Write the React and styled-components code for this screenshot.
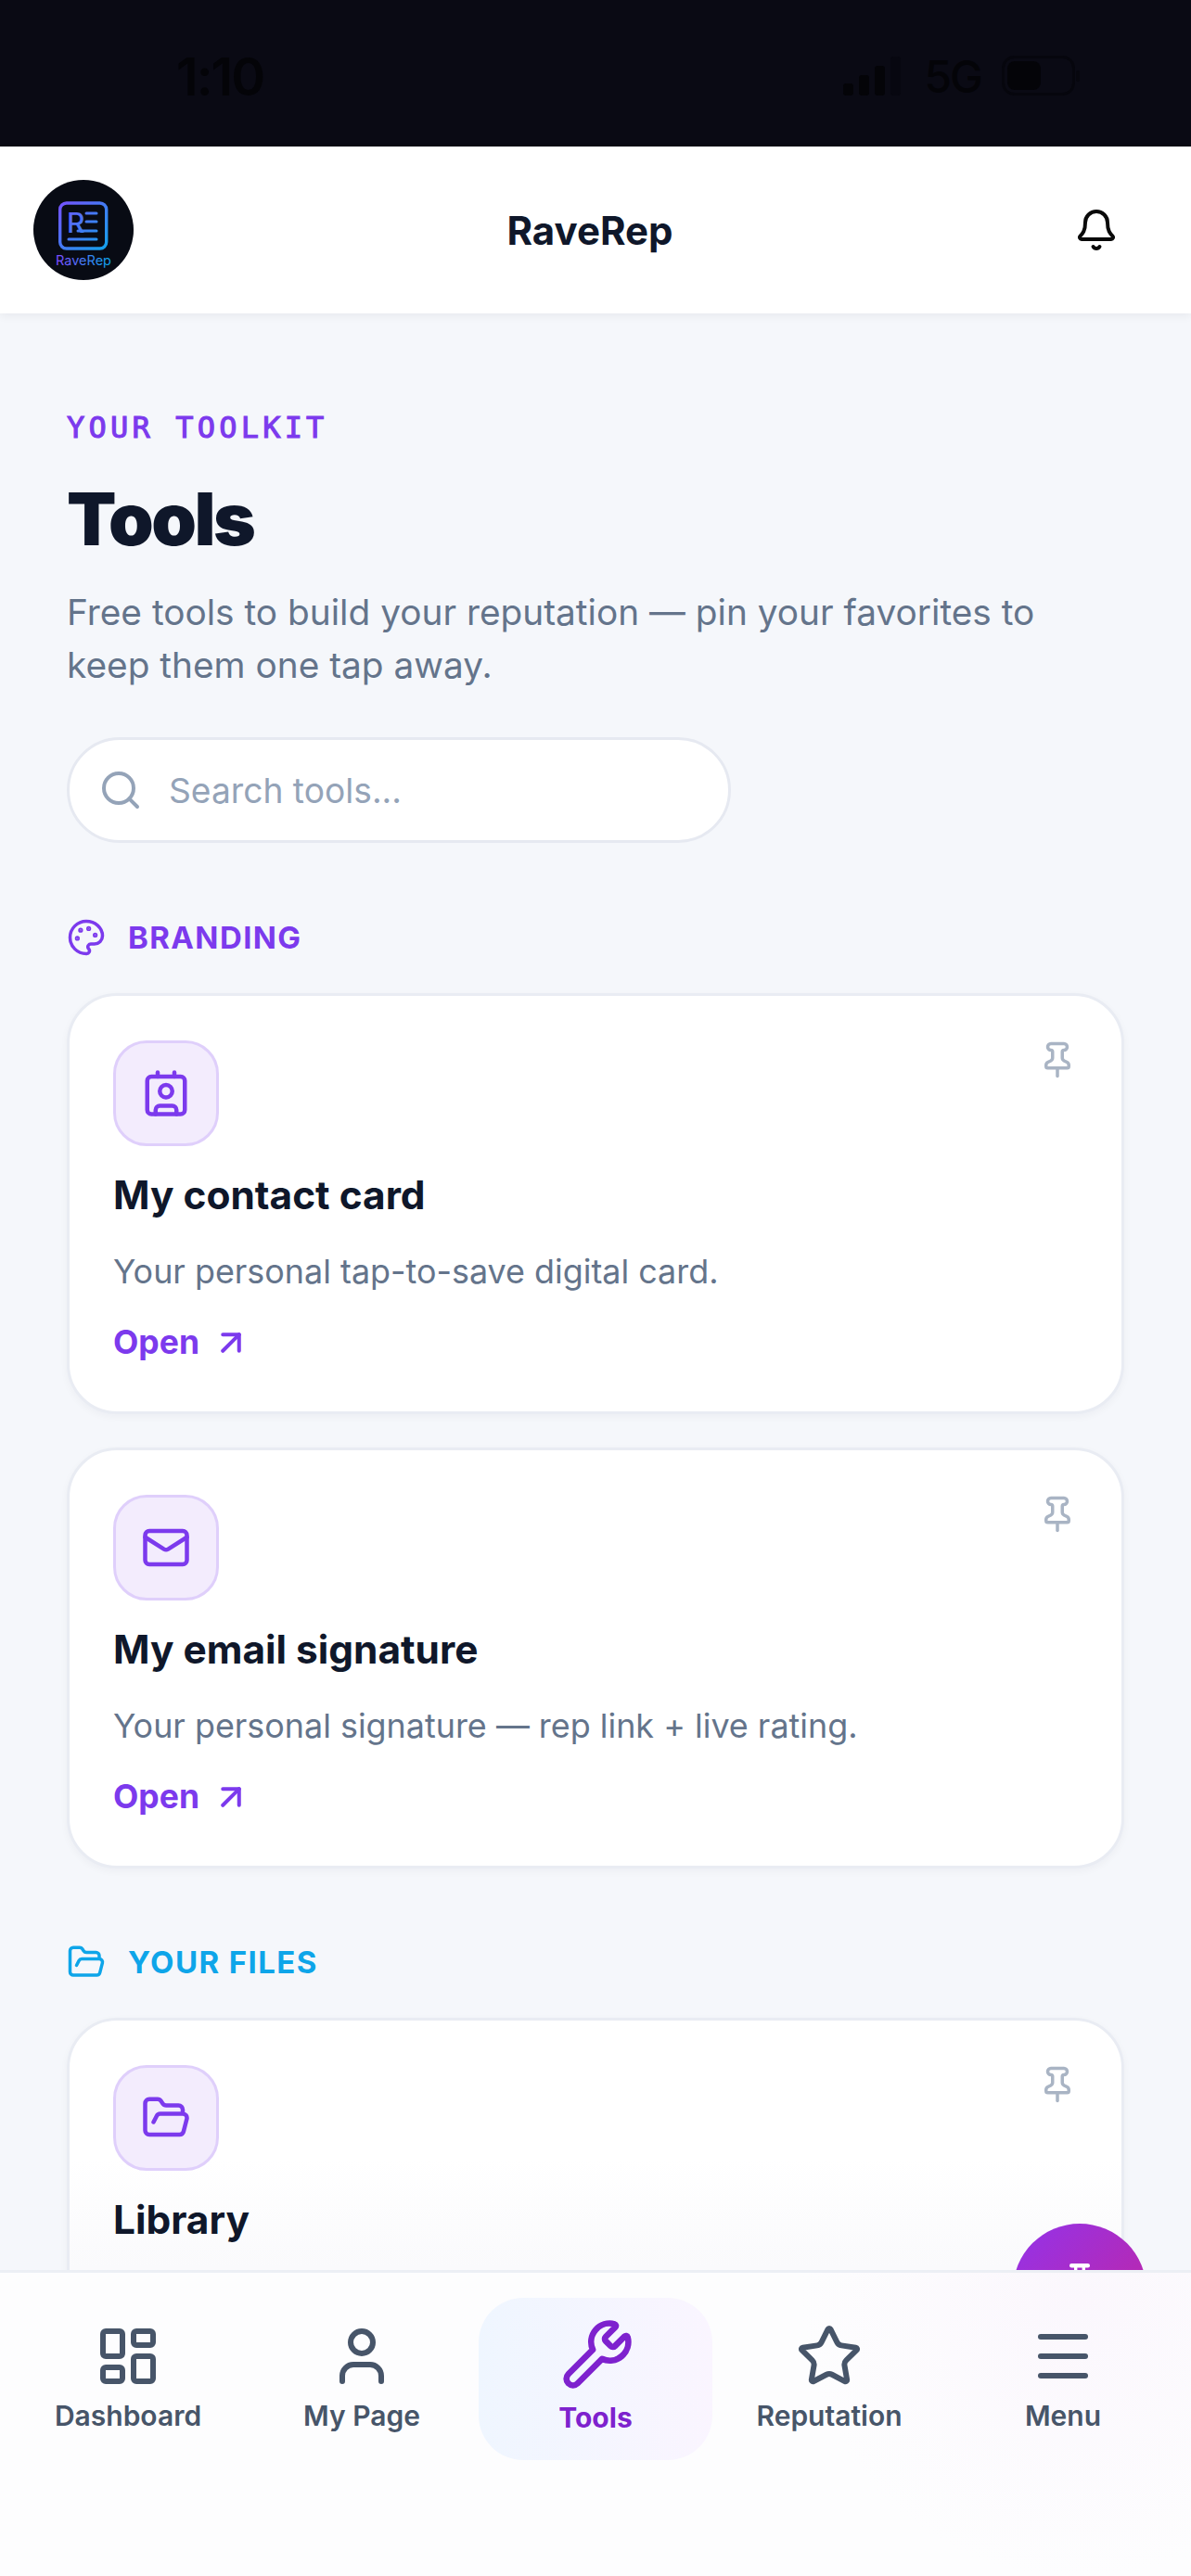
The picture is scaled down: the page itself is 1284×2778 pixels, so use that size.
import React from "react";
import styled, { createGlobalStyle } from "styled-components";
import { ArrowUpRight, Bell, Contact, FolderOpen, LayoutDashboard, Mail, Menu, Palette, Pin, Search, Star, User, Wrench } from "lucide-react";

const Global = createGlobalStyle`
  html, body { margin: 0; padding: 0; background: #fff; }
  * { box-sizing: border-box; }
  body { font-family: Inter, "Liberation Sans", sans-serif; }
`;

const Screen = styled.div`
  position: relative;
  width: 1284px;
  height: 2778px;
  overflow: hidden;
  background: #f5f7fb;
  display: flex;
  flex-direction: column;
`;

const StatusBar = styled.div`
  height: 158px;
  flex: none;
  background: #0a0a14;
  color: #040408;
  display: flex;
  align-items: center;
  justify-content: space-between;
  padding: 0 120px 0 190px;
`;
const Clock = styled.span`
  font: 600 56px Inter, sans-serif;
  letter-spacing: -2px;
  margin-top: 8px;
`;
const StatusRight = styled.div`
  display: flex;
  align-items: center;
  gap: 24px;
  margin-top: 6px;
`;
const FiveG = styled.span`
  font: 500 48px Inter, sans-serif;
  letter-spacing: -2px;
  margin-right: -2px;
`;

const Header = styled.header`
  height: 180px;
  flex: none;
  background: #fff;
  box-shadow: 0 3px 9px rgba(15, 23, 42, 0.06);
  position: relative;
  z-index: 1;
  display: flex;
  align-items: center;
  justify-content: space-between;
  padding: 0 78px 0 36px;
`;
const LogoDisc = styled.div`
  width: 108px;
  height: 108px;
  border-radius: 50%;
  background: #080b14;
  display: flex;
  align-items: center;
  justify-content: center;
`;
const Brand = styled.h2`
  margin: 0 30px 0 0;
  font-size: 42px;
  font-weight: 700;
  color: #0f172a;
`;
const BellWrap = styled.div`
  width: 48px;
  height: 48px;
  color: #0a0a0a;
`;

const Main = styled.main`
  padding: 105px 72px 0;
  display: flex;
  flex-direction: column;
`;
const Eyebrow = styled.div`
  font: 400 32px/36px "DejaVu Sans Mono", monospace;
  -webkit-text-stroke: 1.1px #7c3aed;
  letter-spacing: 4.2px;
  color: #7c3aed;
`;
const Title = styled.h1`
  margin: 33px 0 0;
  font-size: 78px;
  line-height: 96px;
  font-weight: 900;
  letter-spacing: -2.5px;
  color: #0f172a;
`;
const Lead = styled.p`
  margin: 23px 0 0;
  font-size: 38.8px;
  line-height: 57px;
  font-weight: 400;
  color: #64748b;
  width: 1120px;
`;
const SearchBox = styled.div`
  margin-top: 50px;
  width: 716px;
  height: 114px;
  border-radius: 57px;
  background: #fff;
  border: 3px solid #e6e9f1;
  display: flex;
  align-items: center;
  gap: 28px;
  padding-left: 31px;
  color: #94a3b8;
  font-size: 37.2px;
`;
const SectionHead = styled.div`
  display: flex;
  align-items: center;
  gap: 24px;
  margin-top: ${(p) => p.$top}px;
  height: 42px;
  color: ${(p) => p.$color};
  font-size: 33px;
  font-weight: 700;
  letter-spacing: 1.4px;
`;
const Card = styled.article`
  position: relative;
  flex: none;
  height: 454px;
  margin-top: ${(p) => p.$top}px;
  border-radius: 54px;
  background: ${(p) => (p.$fading ? "linear-gradient(#fff 150px, #fafafc 265px)" : "#fff")};
  border: 3px solid #e9ecf3;
  box-shadow: 0 3px 9px rgba(15, 23, 42, 0.04);
  padding: 48px 48px 48px 47px;
`;
const PinButton = styled.div`
  position: absolute;
  top: 48px;
  right: 48px;
  width: 42px;
  height: 42px;
  color: #a9b4c4;
`;
const IconTile = styled.div`
  width: 114px;
  height: 114px;
  border-radius: 36px;
  background: #f3ecfd;
  border: 3px solid #dfcffb;
  color: #7c3aed;
  display: flex;
  align-items: center;
  justify-content: center;
`;
const CardTitle = styled.h3`
  margin: 26px 0 0;
  font-size: 42.4px;
  line-height: 54px;
  font-weight: 700;
  color: #0f172a;
`;
const CardText = styled.p`
  margin: 28px 0 0;
  font-size: 35.9px;
  line-height: 54px;
  color: #64748b;
`;
const OpenLink = styled.div`
  margin-top: 26px;
  display: flex;
  align-items: center;
  gap: 13px;
  font-size: 35.5px;
  line-height: 48px;
  font-weight: 700;
  color: #7c3aed;
`;

const Fab = styled.div`
  position: absolute;
  left: 1092px;
  top: 2398px;
  width: 144px;
  height: 144px;
  border-radius: 50%;
  background: linear-gradient(135deg, #9333ea, #c026a3 90%);
  color: #fff;
  display: flex;
  justify-content: center;
  padding-top: 43px;
`;
const BottomNav = styled.nav`
  position: absolute;
  left: 0;
  right: 0;
  top: 2448px;
  bottom: 0;
  background: radial-gradient(circle 300px at 1164px 30px, #fbf7fd, #fdfdfe);
  border-top: 3px solid #eceff5;
  display: grid;
  grid-template-columns: repeat(5, 252px);
  justify-content: center;
  align-content: start;
  padding-top: 27px;
`;
const NavItem = styled.div`
  height: 175px;
  border-radius: 48px;
  display: flex;
  flex-direction: column;
  align-items: center;
  color: ${(p) => (p.$active ? "#7e22ce" : "#475569")};
  font-size: 30px;
  font-weight: ${(p) => (p.$active ? 700 : 600)};
  background: ${(p) => (p.$active ? "linear-gradient(90deg, #eff6ff, #faf5ff)" : "transparent")};
  padding-top: ${(p) => (p.$active ? 21 : 27)}px;
`;
const ActiveIconSlot = styled.span`
  display: flex;
  margin-left: 4px;
`;
const NavLabel = styled.span`
  line-height: 44px;
  margin-top: ${(p) => (p.$active ? 6 : 6)}px;
`;

const Logo = () => (
  <svg width="108" height="108" viewBox="0 0 108 108">
    <defs>
      <linearGradient id="lt" gradientUnits="userSpaceOnUse" x1="26" y1="20" x2="82" y2="76">
        <stop offset="0" stopColor="#7c4dff" />
        <stop offset="1" stopColor="#0ea5e9" />
      </linearGradient>
      <linearGradient id="lx" gradientUnits="userSpaceOnUse" x1="26" y1="0" x2="82" y2="0">
        <stop offset="0" stopColor="#7c4dff" />
        <stop offset="1" stopColor="#0ea5e9" />
      </linearGradient>
    </defs>
    <rect x="28.7" y="25" width="50" height="49" rx="7" fill="none" stroke="url(#lt)" strokeWidth="3.4" />
    <text x="36" y="57" fontFamily="Inter, sans-serif" fontSize="30" fontWeight="500" fill="url(#lt)">R</text>
    <path d="M57 36h11M57 45h11M48 55h20M38 64h30" stroke="url(#lt)" strokeWidth="3" strokeLinecap="round" fill="none" />
    <text x="54" y="92" textAnchor="middle" fontFamily="Inter, sans-serif" fontSize="14.5" fontWeight="400" fill="url(#lx)">RaveRep</text>
  </svg>
);

const SignalIcon = () => (
  <svg width="63" height="44" viewBox="0 0 63 44" fill="currentColor">
    <rect x="0" y="30" width="11" height="13" rx="3" />
    <rect x="17" y="21" width="11" height="22" rx="3" />
    <rect x="34" y="11" width="11" height="32" rx="3" />
    <rect x="51" y="1" width="11" height="42" rx="3" opacity=".35" />
  </svg>
);
const BatteryIcon = () => (
  <svg width="84" height="44" viewBox="0 0 84 44">
    <rect x="1.5" y="1.5" width="76" height="40" rx="12" fill="none" stroke="currentColor" strokeWidth="3" opacity=".6" />
    <rect x="6" y="6" width="36" height="31" rx="8" fill="currentColor" />
    <rect x="80" y="16" width="4" height="12" rx="2" fill="currentColor" opacity=".5" />
  </svg>
);
const FabGlyph = () => (
  <svg width="24" height="24" viewBox="0 0 24 24" fill="currentColor">
    <rect x="1" y="0" width="22" height="4.5" rx="2.25" />
    <rect x="6" y="3" width="3.4" height="14" />
    <rect x="14.6" y="3" width="3.4" height="14" />
  </svg>
);

const ToolCard = ({ icon: Icon, title, text, top, fading }) => (
  <Card $top={top} $fading={fading}>
    <PinButton><Pin size={42} strokeWidth={2} /></PinButton>
    <IconTile><Icon size={54} strokeWidth={2} /></IconTile>
    <CardTitle>{title}</CardTitle>
    <CardText>{text}</CardText>
    <OpenLink>Open <ArrowUpRight size={42} strokeWidth={2.3} /></OpenLink>
  </Card>
);

const navItems = [
  { label: "Dashboard", icon: LayoutDashboard },
  { label: "My Page", icon: User },
  { label: "Tools", icon: Wrench, active: true },
  { label: "Reputation", icon: Star },
  { label: "Menu", icon: Menu },
];

export default function App() {
  return (
    <Screen>
      <Global />
      <StatusBar>
        <Clock>1:10</Clock>
        <StatusRight>
          <SignalIcon />
          <FiveG>5G</FiveG>
          <BatteryIcon />
        </StatusRight>
      </StatusBar>
      <Header>
        <LogoDisc><Logo /></LogoDisc>
        <Brand>RaveRep</Brand>
        <BellWrap><Bell size={48} strokeWidth={2} /></BellWrap>
      </Header>
      <Main>
        <Eyebrow>YOUR TOOLKIT</Eyebrow>
        <Title>Tools</Title>
        <Lead>Free tools to build your reputation — pin your favorites to keep them one tap away.</Lead>
        <SearchBox><Search size={48} strokeWidth={2} />Search tools...</SearchBox>
        <SectionHead $top={81} $color="#7c3aed"><Palette size={42} strokeWidth={2} />BRANDING</SectionHead>
        <ToolCard top={39} icon={Contact} title="My contact card" text="Your personal tap-to-save digital card." />
        <ToolCard top={36} icon={Mail} title="My email signature" text="Your personal signature — rep link + live rating." />
        <SectionHead $top={80} $color="#0ea5e9"><FolderOpen size={42} strokeWidth={2} />YOUR FILES</SectionHead>
        <ToolCard top={39} fading icon={FolderOpen} title="Library" text="All your saved files in one place." />
      </Main>
      <Fab><FabGlyph /></Fab>
      <BottomNav>
        {navItems.map(({ label, icon: Icon, active }) => (
          <NavItem key={label} $active={active}>
            {active ? (
              <ActiveIconSlot><Icon size={80} strokeWidth={2} /></ActiveIconSlot>
            ) : (
              <Icon size={72} strokeWidth={2} />
            )}
            <NavLabel $active={active}>{label}</NavLabel>
          </NavItem>
        ))}
      </BottomNav>
    </Screen>
  );
}
